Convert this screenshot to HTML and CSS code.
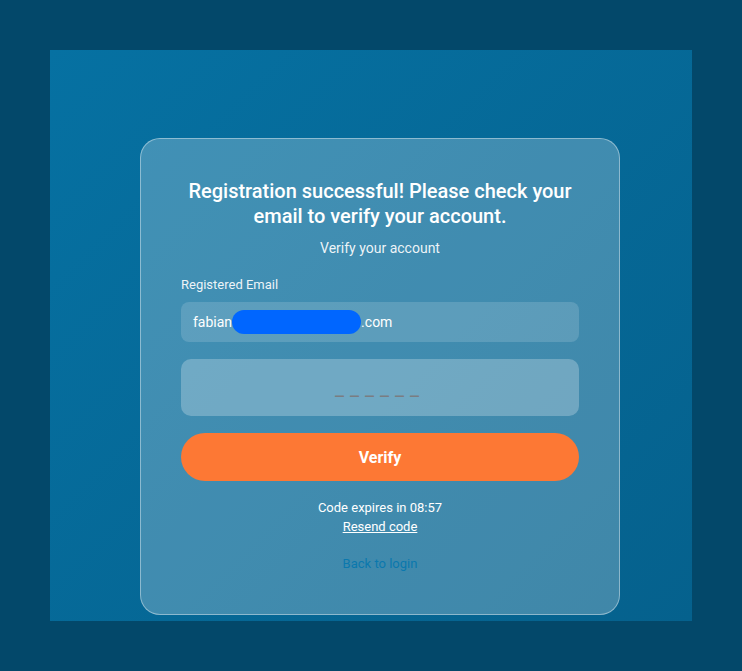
FILE: index.html
```html
<!DOCTYPE html>
<html lang="en">

<head>
    <meta charset="UTF-8">
    <meta name="viewport" content="width=device-width, initial-scale=1.0">
    <title>Verify your account</title>
    <link rel="stylesheet" href="styles.css">
</head>

<body>
    <div class="stage">
        <div class="card">
            <h1>Registration successful! Please check your email to verify your account.</h1>
            <p class="subtitle">Verify your account</p>

            <label for="email">Registered Email</label>
            <div class="email-field" id="email">
                fabian<span class="redact"></span>.com
            </div>

            <input type="text" class="code-input" placeholder="______" maxlength="6">

            <button class="verify-btn">Verify</button>

            <p class="expires">Code expires in 08:57</p>
            <a href="#" class="resend">Resend code</a>
            <a href="#" class="back">Back to login</a>
        </div>
    </div>
</body>

</html>
```

FILE: styles.css
```css
:root {
    --page-bg: #03486a;
    --panel-top: #0671a2;
    --panel-bottom: #05618d;
    --accent: #fd7834;
    --text: #ffffff;
}

* {
    box-sizing: border-box;
}

body {
    margin: 0;
    padding: 50px;
    font-family: Roboto, 'Liberation Sans', sans-serif;
    background-color: var(--page-bg);
    color: var(--text);
}

.stage {
    width: 642px;
    height: 571px;
    display: flex;
    align-items: flex-start;
    padding: 88px 0 0 90px;
    background: linear-gradient(135deg, var(--panel-top), var(--panel-bottom));
}

.card {
    width: 480px;
    display: flex;
    flex-direction: column;
    padding: 40px 40px 42px;
    background-color: rgba(255, 255, 255, 0.24);
    border: 1px solid rgba(255, 255, 255, 0.4);
    border-radius: 20px;
    text-align: center;
}

h1 {
    margin: 0;
    font-size: 20px;
    font-weight: 500;
    line-height: 25px;
}

.subtitle {
    margin: 10px 0 0;
    font-size: 14px;
    line-height: 18px;
    color: rgba(255, 255, 255, 0.92);
}

label {
    display: block;
    margin-top: 20px;
    text-align: left;
    font-size: 13px;
    line-height: 16px;
    color: rgba(255, 255, 255, 0.92);
}

.email-field {
    display: flex;
    align-items: center;
    height: 40px;
    margin-top: 9px;
    padding: 0 12px;
    border-radius: 8px;
    background-color: rgba(255, 255, 255, 0.15);
    font-size: 14px;
    text-align: left;
}

.redact {
    display: inline-block;
    width: 129px;
    height: 24px;
    border-radius: 12px;
    background-color: #0066ff;
}

.code-input {
    height: 57px;
    margin-top: 17px;
    padding: 0 12px;
    border: none;
    border-radius: 10px;
    background-color: rgba(255, 255, 255, 0.25);
    color: var(--text);
    font-family: inherit;
    font-size: 20px;
    letter-spacing: 6px;
    text-align: center;
    outline: none;
}

.code-input::placeholder {
    color: #7a7d82;
}

.verify-btn {
    height: 48px;
    margin-top: 17px;
    border: none;
    border-radius: 24px;
    background-color: var(--accent);
    color: var(--text);
    font-family: inherit;
    font-size: 16px;
    font-weight: 700;
    cursor: pointer;
}

.expires {
    margin: 19px 0 0;
    font-size: 13px;
    line-height: 16px;
}

.resend {
    align-self: center;
    margin-top: 3px;
    font-size: 13px;
    line-height: 16px;
    color: var(--text);
}

.back {
    align-self: center;
    margin-top: 21px;
    font-size: 13px;
    line-height: 16px;
    color: #0a78ae;
    text-decoration: none;
}
```
